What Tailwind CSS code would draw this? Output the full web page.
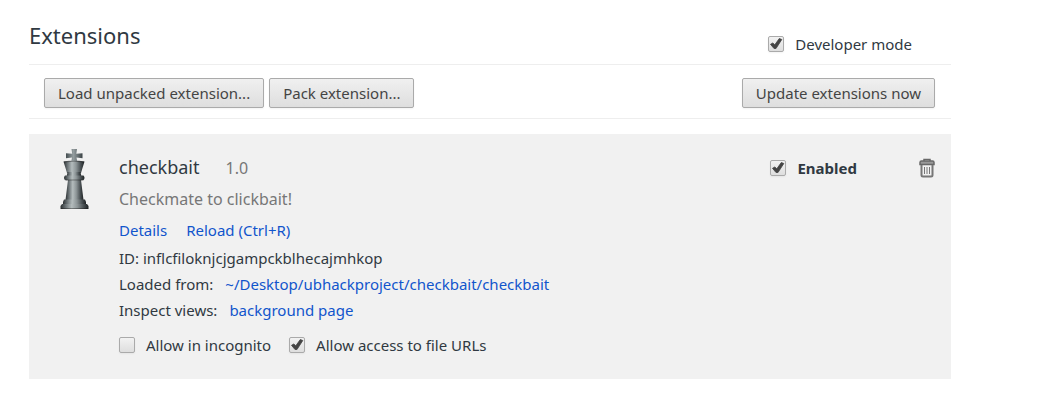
<!DOCTYPE html>
<html lang="en">
<head>
  <meta charset="UTF-8" />
  <meta name="viewport" content="width=device-width, initial-scale=1.0" />
  <title>Extensions</title>
  <script src="https://cdn.jsdelivr.net/npm/@tailwindcss/browser@4"></script>
</head>
<body class="bg-white font-['Noto_Sans',sans-serif] text-[15px] leading-[26px] text-[#303942]">
  <svg class="hidden">
    <symbol id="tick" viewBox="0 0 16 16">
      <path d="M2.500 8.300 4.800 7l2 1.800L11.300 2.500l2.500 1L8 12.500H6z" fill="#444" stroke="#444" stroke-width=".8" stroke-linejoin="round" />
    </symbol>
  </svg>

  <main class="ml-[29px] mr-4 max-w-[922px]">
    <header class="flex h-[65px] items-start justify-between border-b border-[#eee] pt-[19px] pr-[39px]">
      <h1 class="text-[22px] leading-8">Extensions</h1>
      <label class="flex items-center gap-[11px] pt-3">
        <span class="grid">
          <input type="checkbox" checked class="peer size-4 appearance-none rounded-xs border border-[#aaa] bg-linear-to-b from-[#f2f2f2] to-[#dedede] shadow-xs [grid-area:1/1]" />
          <svg class="pointer-events-none invisible size-4 [grid-area:1/1] peer-checked:visible"><use href="#tick" /></svg>
        </span>
        Developer mode
      </label>
    </header>

    <div class="flex h-[54px] items-start gap-[5px] border-b border-[#eee] pt-[13px] pr-4 pl-[15px]">
      <button class="h-[30px] rounded-xs border border-[#aaa] bg-linear-to-b from-[#f0f0f0] to-[#dedede] px-[13px] leading-7 text-[#444] shadow-xs">Load unpacked extension...</button>
      <button class="h-[30px] rounded-xs border border-[#aaa] bg-linear-to-b from-[#f0f0f0] to-[#dedede] px-[13px] leading-7 text-[#444] shadow-xs">Pack extension...</button>
      <button class="ml-auto h-[30px] rounded-xs border border-[#aaa] bg-linear-to-b from-[#f0f0f0] to-[#dedede] px-[13px] leading-7 text-[#444] shadow-xs">Update extensions now</button>
    </div>

    <section class="mt-[15px] flex bg-[#f1f1f1] pt-[15px] pr-4 pb-[21px]">
      <svg class="mr-[30px] ml-[31px] h-[60px] w-[29px] shrink-0" viewBox="0 0 29 60" role="img" aria-label="Chess king">
        <defs>
          <linearGradient id="metal" x1="0" x2="1">
            <stop offset="0" stop-color="#2b3032" />
            <stop offset=".18" stop-color="#687073" />
            <stop offset=".4" stop-color="#b4bcbd" />
            <stop offset=".6" stop-color="#8d9597" />
            <stop offset=".82" stop-color="#4a5154" />
            <stop offset="1" stop-color="#1d2123" />
          </linearGradient>
          <linearGradient id="cross" x1="0" x2="1">
            <stop offset="0" stop-color="#454e51" />
            <stop offset=".45" stop-color="#949d9f" />
            <stop offset="1" stop-color="#3b4346" />
          </linearGradient>
        </defs>
        <path d="M11.500 0h5.500l-.7 4.800 6.200-.6v5l-6-.6.7 3.900h-5.900l.7-3.900-6 .6v-5l6.200.6z" fill="url(#cross)" />
        <path d="M3.500 12.500Q14 10.500 24.500 12.500L21 24H7z" fill="url(#metal)" />
        <path d="M7.500 23h13l.8 4h-14.600z" fill="url(#metal)" />
        <path d="M5 26.500h18.500q2 2.300 0 4.800H5q-2-2.500 0-4.800z" fill="url(#metal)" />
        <path d="M8 31h13l2.500 20H5.500z" fill="url(#metal)" />
        <path d="M4 50.500h21q1.500 2.500 1 5H3q-.5-2.500 1-5z" fill="url(#metal)" />
        <path d="M2 55h25l1.500 2v3H.5v-3z" fill="url(#metal)" />
        <path d="M4 13Q14 11.300 24 13M6 31h16.500M1 59.500h27" fill="none" stroke="#111" stroke-opacity=".4" />
      </svg>

      <div class="min-w-0 flex-1">
        <div class="flex items-baseline pt-[3px]">
          <h2 class="text-[18px] leading-[30px]">checkbait</h2>
          <span class="ml-[26px] text-[16px] text-[#777]">1.0</span>
        </div>
        <p class="pt-px text-[16px] leading-8 text-[#777]">Checkmate to clickbait!</p>
        <div class="flex gap-[19px] leading-[30px] text-[#15c]">
          <a href="#">Details</a>
          <a href="#">Reload (Ctrl+R)</a>
        </div>
        <div>ID: inflcfiloknjcjgampckblhecajmhkop</div>
        <div class="flex gap-3">Loaded from: <a href="#" class="text-[#15c]">~/Desktop/ubhackproject/checkbait/checkbait</a></div>
        <div class="flex gap-3">Inspect views: <a href="#" class="text-[#15c]">background page</a></div>
        <div class="flex gap-[18px] pt-[9px]">
          <label class="flex items-center gap-[11px]">
            <span class="grid">
              <input type="checkbox" class="peer size-4 appearance-none rounded-xs border border-[#aaa] bg-linear-to-b from-[#f2f2f2] to-[#dedede] shadow-xs [grid-area:1/1]" />
              <svg class="pointer-events-none invisible size-4 [grid-area:1/1] peer-checked:visible"><use href="#tick" /></svg>
            </span>
            Allow in incognito
          </label>
          <label class="flex items-center gap-[11px]">
            <span class="grid">
              <input type="checkbox" checked class="peer size-4 appearance-none rounded-xs border border-[#aaa] bg-linear-to-b from-[#f2f2f2] to-[#dedede] shadow-xs [grid-area:1/1]" />
              <svg class="pointer-events-none invisible size-4 [grid-area:1/1] peer-checked:visible"><use href="#tick" /></svg>
            </span>
            Allow access to file URLs
          </label>
        </div>
      </div>

      <div class="flex h-[38px] items-center gap-[62px] self-start">
        <label class="flex items-center gap-[11px] font-bold">
          <span class="grid">
            <input type="checkbox" checked class="peer size-4 appearance-none rounded-xs border border-[#aaa] bg-linear-to-b from-[#f2f2f2] to-[#dedede] shadow-xs [grid-area:1/1]" />
            <svg class="pointer-events-none invisible size-4 [grid-area:1/1] peer-checked:visible"><use href="#tick" /></svg>
          </span>
          Enabled
        </label>
        <button aria-label="Remove checkbait">
          <svg class="h-5 w-4" viewBox="0 0 16 20" fill="none" stroke="#686868">
            <path d="M5 3V1.500h6V3" stroke-width="1.500" />
            <path d="M1 6.500V4.500Q1 3 2.500 3h11Q15 3 15 4.500v2z" stroke-width="1.500" fill="#999" />
            <path d="M2.500 7v10q0 1.500 1.500 1.500h8q1.500 0 1.500-1.500V7" stroke="#777" stroke-width="2" />
            <path d="M5.500 9v7M8 9v7M10.500 9v7" stroke="#777" />
          </svg>
        </button>
      </div>
    </section>
  </main>
</body>
</html>
